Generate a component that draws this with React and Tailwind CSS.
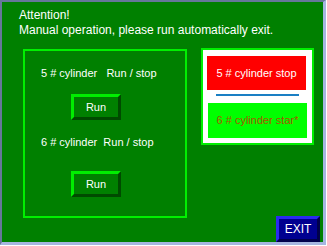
export default function App() {
  return (
    <div className="w-[327px] h-[246px] bg-white overflow-hidden" style={{ fontFamily: '"Liberation Sans", Arial, sans-serif' }}>
      <div className="w-[326px] h-[245px] flex flex-col bg-[#008000] border-t-2 border-l-2 border-t-[#66779a] border-l-[#66779a] border-r-[3px] border-b-[3px] border-r-[#a6b6e0] border-b-[#a6b6e0] text-white text-[12px] leading-[15px]">
        <div className="pl-[17px] pt-[6px]">
          <p>Attention!</p>
          <p>Manual operation, please run automatically exit.</p>
        </div>

        <div className="flex items-start mt-[11px] ml-[21px] text-[11px]">
          <div className="w-[164px] h-[169px] border-2 border-[#00f000] flex flex-col pl-[16px] pt-[15px]">
            <p className="whitespace-pre">5 # cylinder   Run / stop</p>
            <button className="mt-[13px] ml-[30px] w-[50px] h-[26px] bg-[#008000] border-[3px] border-t-[#00ee00] border-l-[#00ee00] border-r-[#004a00] border-b-[#004a00] text-white text-[11px] flex items-center justify-center">
              Run
            </button>
            <p className="mt-[15px] whitespace-pre">6 # cylinder  Run / stop</p>
            <button className="mt-[21px] ml-[30px] w-[50px] h-[26px] bg-[#008000] border-[3px] border-t-[#00ee00] border-l-[#00ee00] border-r-[#004a00] border-b-[#004a00] text-white text-[11px] flex items-center justify-center">
              Run
            </button>
          </div>

          <div className="ml-[14px] mt-[-1px] w-[113px] h-[97px] border-2 border-[#00f000] bg-white flex flex-col px-[4px] pt-[6px]">
            <div className="w-[99px] h-[34px] bg-[#ff0000] text-white flex items-center justify-center">
              5 # cylinder stop
            </div>
            <div className="mt-[4px] ml-[9px] w-[83px] h-[2px] bg-[#1a7fc4]" />
            <div className="mt-[7px] ml-[1px] w-[99px] h-[35px] bg-[#00ff00] text-[#a85400] flex items-center justify-center">
              6 # cylinder star*
            </div>
          </div>
        </div>

        <button className="self-end mt-[-2px] mr-[3px] w-[44px] h-[26px] bg-[#000090] border-[3px] border-t-[#2a2af0] border-l-[#2a2af0] border-r-[#00004c] border-b-[#00004c] text-white text-[12px] flex items-center justify-center">
          EXIT
        </button>
      </div>
    </div>
  );
}
